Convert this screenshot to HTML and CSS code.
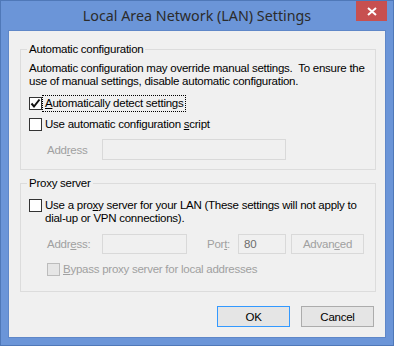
FILE: index.html
```html
<!DOCTYPE html>
<html>
<head>
<meta charset="utf-8">
<link rel="stylesheet" href="styles.css">
</head>
<body>
<div class="window">
  <div class="titlebar">
    <span></span>
    <span class="title">Local Area Network (LAN) Settings</span>
    <span class="close-wrap"><span class="close">
      <svg width="10" height="9" viewBox="0 0 10 9"><path d="M1 1 L9 8 M9 1 L1 8" stroke="#fff" stroke-width="2" fill="none"/></svg>
    </span></span>
  </div>
  <div class="client">
    <fieldset class="group group-auto">
      <legend>Automatic configuration</legend>
      <p class="desc">Automatic configuration may override manual settings.&nbsp; To ensure the<br>use of manual settings, disable automatic configuration.</p>
      <div class="check-row row-detect">
        <span class="box checked"><svg width="11" height="11" viewBox="0 0 11 11"><path d="M1.5 5.5 L4 8.5 L9.5 1.5" stroke="#111" stroke-width="2" fill="none"/></svg></span>
        <span class="label focus"><u>A</u>utomatically detect settings</span>
      </div>
      <div class="check-row row-script">
        <span class="box"></span>
        <span class="label">Use automatic configuration <u>s</u>cript</span>
      </div>
      <div class="field-row row-address">
        <span class="muted lbl-address">Add<u>r</u>ess</span>
        <span class="textbox tb-address"></span>
      </div>
    </fieldset>
    <fieldset class="group group-proxy">
      <legend>Proxy server</legend>
      <div class="check-row row-proxy">
        <span class="box"></span>
        <span class="label">Use a pro<u>x</u>y server for your LAN (These settings will not apply to<br>dial-up or VPN connections).</span>
      </div>
      <div class="field-row row-proxyaddr">
        <span class="muted lbl-address">Addr<u>e</u>ss:</span>
        <span class="textbox tb-proxy"></span>
        <span class="muted lbl-port">Por<u>t</u>:</span>
        <span class="textbox tb-port">80</span>
        <span class="btn btn-adv">Advan<u>c</u>ed</span>
      </div>
      <div class="check-row row-bypass">
        <span class="box disabled"></span>
        <span class="label muted"><u>B</u>ypass proxy server for local addresses</span>
      </div>
    </fieldset>
    <div class="buttons">
      <span class="btn btn-ok">OK</span>
      <span class="btn">Cancel</span>
    </div>
  </div>
</div>
</body>
</html>
```

FILE: styles.css
```css
html, body {
  margin: 0;
  padding: 0;
  background: #6b95d8;
}
.window {
  width: 394px;
  height: 346px;
  box-sizing: border-box;
  border: 1px solid #4f78b8;
  background: #6b95d8;
  display: flex;
  flex-direction: column;
  font-family: "Liberation Sans", Arial, sans-serif;
  font-size: 11.5px;
  letter-spacing: -0.25px;
  color: #000;
}
.titlebar {
  height: 29px;
  display: grid;
  grid-template-columns: 1fr auto 1fr;
  align-items: start;
}
.title {
  font-family: "Noto Sans", sans-serif;
  font-size: 14.3px;
  letter-spacing: 0;
  color: #2b2b2b;
  line-height: 30px;
  white-space: nowrap;
}
.close-wrap {
  display: flex;
  justify-content: flex-end;
  padding-right: 6px;
}
.close {
  width: 31px;
  height: 20px;
  background: #c75050;
  display: flex;
  align-items: center;
  justify-content: center;
}
.client {
  flex: 1;
  min-width: 0;
  margin: 0 7px 7px 7px;
  background: #f0f0f0;
  border: 1px solid #5f87c8;
  display: flex;
  flex-direction: column;
  padding: 11px 9px 0 11px;
}
.group {
  margin: 0;
  min-width: 0;
  border: 1px solid #dcdcdc;
  padding: 0 8px 0 8px;
}
.group legend {
  padding: 0 2px;
  margin-left: -2px;
  line-height: 14px;
  color: #000;
}
.group-auto {
  height: 128px;
  box-sizing: border-box;
}
.group-proxy {
  margin-top: 6px;
  height: 116px;
  box-sizing: border-box;
}
.desc {
  margin: 6px 0 0 0;
  line-height: 13px;
  white-space: nowrap;
}
.check-row {
  display: flex;
  align-items: flex-start;
}
.box {
  width: 13px;
  height: 13px;
  box-sizing: border-box;
  border: 1px solid #333;
  background: #fff;
  flex: none;
  display: flex;
  align-items: center;
  justify-content: center;
  margin-right: 3px;
}
.box.disabled {
  border-color: #bcbcbc;
  background: #e6e6e6;
}
.label {
  line-height: 13px;
  white-space: nowrap;
}
.label.focus {
  outline: 1px dotted #000;
  outline-offset: 1px;
  margin-left: -1px;
  padding-left: 1px;
}
.row-detect { margin-top: 9px; }
.row-script { margin-top: 8px; }
.field-row {
  display: flex;
  align-items: center;
}
.row-address { margin-top: 8px; }
.muted { color: #a0a0a0; }
.lbl-address {
  padding-left: 18px;
  box-sizing: border-box;
  width: 73px;
  flex: none;
}
.textbox {
  box-sizing: border-box;
  border: 1px solid #d9d9d9;
  background: #f0f0f0;
  display: flex;
  align-items: center;
  padding-left: 5px;
  flex: none;
}
.tb-address { width: 184px; height: 21px; }
.row-proxy { margin-top: 9px; }
.row-proxyaddr { margin-top: 9px; }
.tb-proxy { width: 85px; height: 20px; }
.lbl-port {
  width: 51px;
  box-sizing: border-box;
  padding-left: 20px;
  flex: none;
}
.tb-port { width: 48px; height: 20px; color: #6d6d6d; }
.btn {
  box-sizing: border-box;
  width: 73px;
  height: 21px;
  border: 1px solid #acacac;
  background: #e5e5e5;
  display: flex;
  align-items: center;
  justify-content: center;
  flex: none;
}
.btn-adv {
  margin-left: 5px;
  height: 20px;
  color: #a0a0a0;
  border-color: #d9d9d9;
  background: #f0f0f0;
}
.btn-ok { border-color: #3399ff; }
.row-bypass { margin-top: 9px; padding-left: 18px; }
.buttons {
  display: flex;
  justify-content: flex-end;
  gap: 11px;
  margin-top: 14px;
  padding-right: 2px;
}
```
